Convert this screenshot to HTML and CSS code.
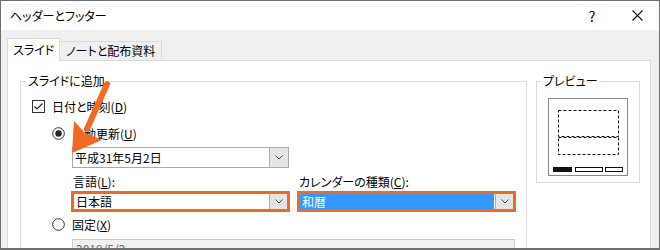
FILE: index.html
```html
<!DOCTYPE html>
<html>
<head>
    <meta charset="UTF-8">
    <title>ヘッダーとフッター</title>
    <link rel="stylesheet" href="styles.css">
</head>
<body>
<div class="dialog">
    <div class="titlebar">
        <span class="title">ヘッダーとフッター</span>
        <span class="help">?</span>
        <svg class="close" width="11" height="11" viewBox="0 0 11 11"><path d="M0.5 0.5L10.5 10.5M10.5 0.5L0.5 10.5" stroke="#111" stroke-width="1.1"/></svg>
    </div>
    <div class="body">
        <div class="tabs">
            <div class="tab active">スライド</div>
            <div class="tab">ノートと配布資料</div>
        </div>
        <div class="panel">
            <div class="group main">
                <div class="group-title">スライドに追加</div>
                <div class="check-row">
                    <svg class="checkbox" width="13" height="13" viewBox="0 0 13 13"><rect x="0.5" y="0.5" width="12" height="12" fill="#fff" stroke="#333"/><path d="M2.5 6.5L5 9L10.5 3.5" fill="none" stroke="#222" stroke-width="1.1"/></svg>
                    <span>日付と時刻(<u>D</u>)</span>
                </div>
                <div class="radio-row">
                    <svg class="radio" width="13" height="13" viewBox="0 0 13 13"><circle cx="6.5" cy="6.5" r="5.8" fill="#fff" stroke="#333"/><circle cx="6.5" cy="6.5" r="3.2" fill="#222"/></svg>
                    <span>自動更新(<u>U</u>)</span>
                </div>
                <div class="combo date">
                    <span class="combo-text">平成31年5月2日</span>
                    <span class="combo-btn"><svg width="8" height="5" viewBox="0 0 8 5"><path d="M0.5 0.5L4 4L7.5 0.5" fill="none" stroke="#444"/></svg></span>
                </div>
                <div class="pair">
                    <div class="field">
                        <div class="label">言語(<u>L</u>):</div>
                        <div class="hl">
                            <span class="combo-text">日本語</span>
                            <span class="combo-btn"><svg width="8" height="5" viewBox="0 0 8 5"><path d="M0.5 0.5L4 4L7.5 0.5" fill="none" stroke="#444"/></svg></span>
                        </div>
                    </div>
                    <div class="field">
                        <div class="label">カレンダーの種類(<u>C</u>):</div>
                        <div class="hl">
                            <span class="combo-text selected">和暦</span>
                            <span class="combo-btn"><svg width="8" height="5" viewBox="0 0 8 5"><path d="M0.5 0.5L4 4L7.5 0.5" fill="none" stroke="#444"/></svg></span>
                        </div>
                    </div>
                </div>
                <div class="radio-row fixed">
                    <svg class="radio" width="13" height="13" viewBox="0 0 13 13"><circle cx="6.5" cy="6.5" r="5.8" fill="#fff" stroke="#333"/></svg>
                    <span>固定(<u>X</u>)</span>
                </div>
                <div class="textbox">2019/5/2</div>
            </div>
            <div class="group preview">
                <div class="group-title">プレビュー</div>
                <svg class="preview-pic" width="80" height="78" viewBox="0 0 80 78">
                    <rect x="0.5" y="0.5" width="79" height="77" fill="#fff" stroke="#8a8a8a"/>
                    <rect x="10.5" y="12.5" width="60" height="26" fill="none" stroke="#111" stroke-dasharray="3 2"/>
                    <rect x="10.5" y="39.5" width="60" height="17" fill="none" stroke="#111" stroke-dasharray="3 2"/>
                    <rect x="5" y="69" width="19" height="5" fill="#111"/>
                    <rect x="27.5" y="69.5" width="27" height="4" fill="#fff" stroke="#111"/>
                    <rect x="57.5" y="69.5" width="17" height="4" fill="#fff" stroke="#111"/>
                </svg>
            </div>
        </div>
    </div>
    <!-- 注目用の矢印 -->
    <svg class="arrow" width="660" height="250" viewBox="0 0 660 250">
        <path d="M107 84L87 129" stroke="#ef6a22" stroke-width="6" stroke-linecap="round"/>
        <polygon points="72,153 74,121 85,133 102,140" fill="#ef6a22"/>
    </svg>
</div>
</body>
</html>
```

FILE: styles.css
```css
*{
    margin: 0;
    padding: 0;
    box-sizing: border-box;
}
body{
    background: #fff;
}
.dialog{
    position: relative;
    width: 660px;
    height: 250px;
    border: 1px solid #6e6e6e;
    border-bottom-width: 2px;
    background: #f0f0f0;
    overflow: hidden;
    display: flex;
    flex-direction: column;
    font: 12px/14px "Noto Sans CJK JP", sans-serif;
    font-feature-settings: "palt";
    color: #000;
}
.titlebar{
    height: 29px;
    background: #fff;
    display: flex;
    align-items: center;
    padding-left: 9px;
}
.title{
    flex: 1;
}
.help{
    width: 14px;
    text-align: center;
    font-size: 14px;
    margin-right: 33px;
}
.close{
    margin-right: 16px;
}
.body{
    flex: 1;
    display: flex;
    flex-direction: column;
    padding: 8px 8px 0 6px;
    min-height: 0;
}
.tabs{
    display: flex;
    align-items: flex-end;
    margin-bottom: -1px;
    position: relative;
    z-index: 1;
}
.tab{
    height: 20px;
    line-height: 18px;
    padding: 0 6px;
    border: 1px solid #d9d9d9;
    background: #f0f0f0;
    margin-left: -1px;
    white-space: nowrap;
}
.tab.active{
    height: 23px;
    line-height: 22px;
    padding: 0 5px;
    margin-left: 0;
    border-bottom: none;
    background: #fff;
}
.panel{
    flex: 1;
    background: #fff;
    border: 1px solid #d9d9d9;
    border-bottom: none;
    display: flex;
    align-items: flex-start;
    padding: 20px 0 0 12px;
    overflow: hidden;
}
.group{
    border: 1px solid #dcdcdc;
}
.group-title{
    width: max-content;
    margin: -8px 0 0 5px;
    padding: 0 2px;
    background: #fff;
    line-height: 14px;
}
.group.main{
    width: 507px;
    height: 220px;
    flex: none;
}
.group.preview{
    width: 104px;
    height: 102px;
    margin-left: 9px;
    flex: none;
}
.group.preview .group-title{
    margin-left: 4px;
}
.preview-pic{
    display: block;
    margin: 10px 0 0 11px;
}
.check-row,
.radio-row{
    display: flex;
    align-items: center;
    gap: 7px;
    height: 13px;
}
.check-row{
    margin: 12px 0 0 11px;
}
.radio-row{
    margin: 14px 0 0 31px;
}
.radio-row.fixed{
    margin-top: 6px;
}
.checkbox,
.radio{
    flex: none;
    display: block;
}
.combo{
    display: flex;
    height: 21px;
    border: 1px solid #a9a9a9;
    background: #fff;
}
.combo.date{
    width: 217px;
    margin: 7px 0 0 51px;
}
.combo-text{
    flex: 1;
    padding-left: 2px;
    line-height: 19px;
}
.combo-btn{
    width: 19px;
    border-left: 1px solid #adadad;
    background: #e5e5e5;
    display: flex;
    align-items: center;
    justify-content: center;
}
.pair{
    display: flex;
    gap: 7px;
    margin: 7px 0 0 50px;
}
.field{
    width: 219px;
}
.label{
    padding-left: 2px;
    line-height: 14px;
}
.hl{
    display: flex;
    margin-top: 2px;
    height: 21px;
    border: 3px solid #ef6a22;
    background: #fff;
}
.hl .combo-text{
    line-height: 15px;
}
.hl .combo-btn{
    width: 18px;
}
.combo-text.selected{
    background: #3399ff;
    color: #fff;
    margin-right: 1px;
}
.textbox{
    width: 443px;
    height: 21px;
    margin: 8px 0 0 51px;
    border: 1px solid #cccccc;
    background: #f0f0f0;
    color: #6d6d6d;
    padding-left: 3px;
    line-height: 17px;
}
.arrow{
    position: absolute;
    left: -1px;
    top: -1px;
    pointer-events: none;
}
```
